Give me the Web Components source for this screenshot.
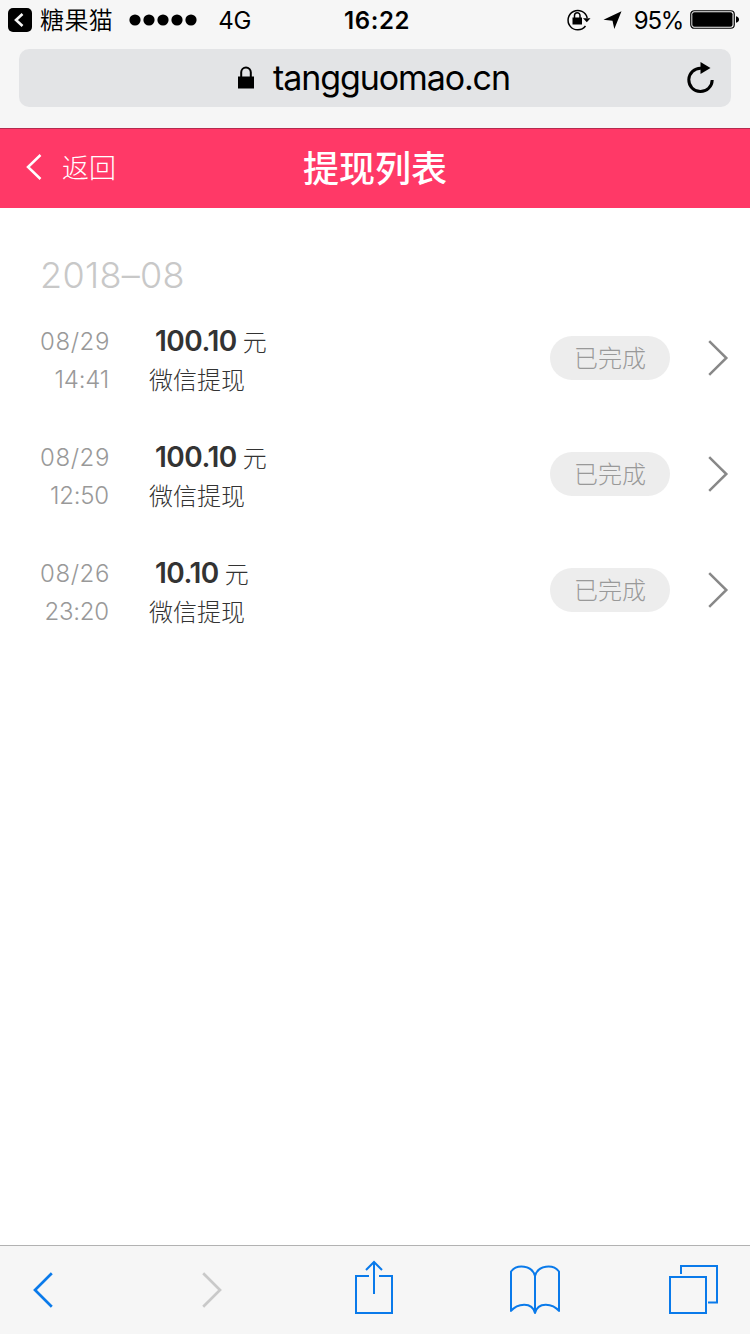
<!DOCTYPE html>
<html lang="zh-CN">
<head>
<meta charset="utf-8">
<title>提现列表</title>
<style>
	body {
		margin: 0;
		background: #fff;
		font-family: Inter, "Noto Sans CJK SC", sans-serif;
	}
</style>
</head>
<body>
<phone-screen>
	<status-bar slot="top" app="糖果猫" network="4G" time="16:22" battery="95%"></status-bar>
	<address-bar slot="top">tangguomao.cn</address-bar>
	<nav-header slot="top" back="返回">提现列表</nav-header>
	<month-group>
		<span slot="month">2018–08</span>
		<withdraw-item date="08/29" time="14:41" amount="100.10" status="已完成">微信提现</withdraw-item>
		<withdraw-item date="08/29" time="12:50" amount="100.10" status="已完成">微信提现</withdraw-item>
		<withdraw-item date="08/26" time="23:20" amount="10.10" status="已完成">微信提现</withdraw-item>
	</month-group>
	<tool-bar slot="bottom"></tool-bar>
</phone-screen>

<script>
class BaseElement extends HTMLElement {
	constructor() {
		super();
		this.attachShadow({ mode: "open" });
		const tmpl = document.createElement("template");
		tmpl.innerHTML = this.constructor.markup;
		this.shadowRoot.appendChild(tmpl.content.cloneNode(true));
	}

	connectedCallback() {
		// every [data-attr] node shows the host attribute of that name
		this.shadowRoot.querySelectorAll("[data-attr]").forEach((node) => {
			node.textContent = this.getAttribute(node.dataset.attr);
		});
	}
}

// name: [width, height, shapes]
const ICONS = {
	app: [24, 24, `<rect width="24" height="24" rx="5" fill="#000"/><path d="M14.5 6 8 12l6.5 6" stroke="#f6f6f6" stroke-width="2.6"/>`],
	signal: [68, 12, [6, 20, 34, 48, 62].map((x) => `<circle cx="${x}" cy="6" r="5.6" fill="#000"/>`).join("")],
	rotation: [24, 22, `<path d="M20.2 9A9.7 9.7 0 1 0 18.5 17" stroke-width="1.5"/><path d="M16 9.3h7.5l-3.7 4z" fill="currentColor"/><rect x="5.5" y="8.5" width="9.5" height="7" fill="currentColor"/><path d="M7.5 10V6.500a2.750 2.750 0 0 1 5.500 0V10" stroke-width="1.5"/>`],
	location: [20, 18, `<path d="M18.5.3.5 8.800 9.500 9.800 11.300 18z" fill="currentColor"/>`],
	battery: [50, 20, `<rect x=".75" y=".75" width="43.5" height="17.5" rx="3.5" stroke-width="1.2"/><rect x="2.3" y="2.3" width="40.2" height="14.4" rx="2" fill="currentColor"/><path d="M46 6.2q3 .8 3 3.3t-3 3.3z" fill="currentColor"/>`],
	lock: [16, 23, `<rect x="0" y="10.5" width="16" height="12" fill="currentColor"/><path d="M3.2 11V6.3a4.8 4.8 0 0 1 9.6 0V11" stroke-width="2"/>`],
	reload: [28, 32, `<path d="M14 6.2A11.7 11.7 0 1 0 25.2 18" stroke-width="3"/><path d="M13.5 0v12l10-6z" fill="currentColor"/>`],
	back: [16, 26, `<path d="M14.5 1 2 13l12.5 12" stroke-width="2.5"/>`],
	more: [20, 36, `<path d="M1.2 1.2 18.3 18 1.2 34.8" stroke-width="2.5"/>`],
	prev: [20, 36, `<path d="M18.8 1.2 2 18l16.8 16.8" stroke-width="2.7"/>`],
	next: [20, 36, `<path d="M1.2 1.2 18 18 1.2 34.8" stroke-width="2.7"/>`],
	share: [38, 53, `<path d="M14 15H1v37h36V15H24" stroke-width="2"/><path d="M19 33V1.5M11 9l8-8 8 8" stroke-width="2"/>`],
	book: [50, 50, `<path d="M25 12C22 1 7 0 1 7.5V47C7 39.5 22 37 25 49 28 37 43 39.5 49 47V7.5C43 0 28 1 25 12V48" stroke-width="2" stroke-linejoin="round"/>`],
	tabs: [49, 49, `<rect x="1" y="12" width="36" height="36" stroke-width="2"/><path d="M12 9V1h36v36.5h-9" stroke-width="2"/>`],
};

class UiIcon extends BaseElement {
	static get markup() {
		return `<style>:host { display: block; flex: none; } svg { display: block; overflow: visible; }</style><svg fill="none" stroke="none"></svg>`;
	}

	connectedCallback() {
		const [width, height, shapes] = ICONS[this.getAttribute("name")];
		const svg = this.shadowRoot.querySelector("svg");
		svg.setAttribute("width", width);
		svg.setAttribute("height", height);
		svg.setAttribute("viewBox", `0 0 ${width} ${height}`);
		svg.innerHTML = shapes;
		svg.querySelectorAll("[stroke-width]:not([stroke])").forEach((shape) => {
			shape.setAttribute("stroke", "currentColor");
		});
	}
}

class PhoneScreen extends BaseElement {
	static get markup() {
		return `
		<style>
		:host {
			display: flex;
			flex-direction: column;
			width: 750px;
			height: 1334px;
			overflow: hidden;
			background: #fff;
		}
		main { flex: 1; }
		</style>
		<slot name="top"></slot>
		<main><slot></slot></main>
		<slot name="bottom"></slot>`;
	}
}

class StatusBar extends BaseElement {
	static get markup() {
		return `
		<style>
		:host {
			display: grid;
			grid-template-columns: 344px 1fr auto;
			align-items: center;
			box-sizing: border-box;
			height: 40px;
			padding-right: 10px;
			background: #f6f6f6;
			color: #000;
			font-size: 24px;
			line-height: 38px;
			white-space: nowrap;
		}
		div { display: flex; align-items: center; height: 40px; }
		span { padding-top: 2px; }
		.left { padding-left: 8px; }
		.app { margin: 0 16px 0 8px; font-weight: 350; letter-spacing: 0.4px; }
		.network { margin-left: 21px; letter-spacing: -0.3px; }
		.time { font-weight: 600; letter-spacing: 0.6px; }
		.battery { margin: 0 7px 0 11px; letter-spacing: -1.3px; }
		.location { margin-left: 12px; }
		</style>
		<div class="left">
			<ui-icon name="app"></ui-icon>
			<span class="app" data-attr="app"></span>
			<ui-icon name="signal"></ui-icon>
			<span class="network" data-attr="network"></span>
		</div>
		<span class="time" data-attr="time"></span>
		<div>
			<ui-icon name="rotation"></ui-icon>
			<ui-icon class="location" name="location"></ui-icon>
			<span class="battery" data-attr="battery"></span>
			<ui-icon name="battery"></ui-icon>
		</div>`;
	}
}

class AddressBar extends BaseElement {
	static get markup() {
		return `
		<style>
		:host {
			display: block;
			box-sizing: border-box;
			height: 88px;
			padding: 9px 19px 0;
			background: #f6f6f6;
			color: #000;
		}
		.field {
			display: flex;
			align-items: center;
			box-sizing: border-box;
			height: 58px;
			padding: 0 16px 0 219px;
			border-radius: 10px;
			background: #e3e4e6;
		}
		.url {
			flex: 1;
			margin-left: 19px;
			font-size: 34px;
			letter-spacing: -1.1px;
			line-height: 56px;
		}
		ui-icon { margin-bottom: 1px; }
		</style>
		<div class="field">
			<ui-icon name="lock"></ui-icon>
			<span class="url"><slot></slot></span>
			<ui-icon name="reload"></ui-icon>
		</div>`;
	}
}

class NavHeader extends BaseElement {
	static get markup() {
		return `
		<style>
		:host {
			display: grid;
			grid-template-columns: 1fr auto 1fr;
			align-items: center;
			box-sizing: border-box;
			height: 80px;
			border-top: 1px solid #b52b4e;
			background: #ff3967;
			color: #fff;
		}
		.back {
			display: flex;
			align-items: center;
			gap: 20px;
			padding: 0 0 4px 26px;
			font-size: 27px;
			font-weight: 300;
		}
		h1 {
			margin: 0;
			font-size: 36px;
			font-weight: 500;
			line-height: 78px;
		}
		</style>
		<div class="back"><ui-icon name="back"></ui-icon><span data-attr="back"></span></div>
		<h1><slot></slot></h1>`;
	}
}

class MonthGroup extends BaseElement {
	static get markup() {
		return `
		<style>
		:host { display: block; padding-top: 41px; }
		h2 {
			margin: 0;
			padding-left: 40px;
			height: 51px;
			color: #c8c8c8;
			font-size: 36px;
			font-weight: 300;
			letter-spacing: 0.3px;
			line-height: 53px;
		}
		</style>
		<h2><slot name="month"></slot></h2>
		<slot></slot>`;
	}
}

class WithdrawItem extends BaseElement {
	static get markup() {
		return `
		<style>
		:host {
			display: grid;
			grid-template-columns: 109px 1fr 120px 58px;
			align-items: center;
			box-sizing: border-box;
			height: 116px;
			padding-right: 22px;
			font-size: 24px;
			line-height: 38px;
			white-space: nowrap;
		}
		.when {
			display: flex;
			flex-direction: column;
			align-items: flex-end;
			padding-top: 5px;
			color: #999;
			font-weight: 300;
		}
		.date { letter-spacing: 0.6px; margin-right: -1px; }
		.time { letter-spacing: -0.2px; }
		.what {
			display: flex;
			flex-direction: column;
			padding: 5px 0 0 40px;
			color: #333;
			font-weight: 300;
		}
		.sum { display: flex; align-items: baseline; gap: 6px; padding-left: 6px; height: 40px; }
		b { font-size: 28px; font-weight: 600; letter-spacing: -0.5px; }
		.status {
			height: 44px;
			border-radius: 22px;
			background: #ededed;
			color: #999;
			font-weight: 300;
			line-height: 45px;
			text-align: center;
		}
		ui-icon { margin-left: 38px; color: #888; }
		</style>
		<div class="when"><span class="date" data-attr="date"></span><span class="time" data-attr="time"></span></div>
		<div class="what">
			<div class="sum"><b data-attr="amount"></b><span>元</span></div>
			<slot></slot>
		</div>
		<div class="status" data-attr="status"></div>
		<ui-icon name="more"></ui-icon>`;
	}
}

class ToolBar extends BaseElement {
	static get markup() {
		return `
		<style>
		:host {
			display: grid;
			grid-template-columns: 169px 153px 155px 159px auto;
			align-items: end;
			box-sizing: border-box;
			height: 89px;
			padding: 0 0 20px 33px;
			border-top: 1px solid #b2b2b2;
			background: #f6f6f6;
			color: #0a7aea;
		}
		.chevron { margin-bottom: 6px; }
		.off { color: #c9c9c9; }
		</style>
		<ui-icon class="chevron" name="prev"></ui-icon>
		<ui-icon class="chevron off" name="next"></ui-icon>
		<ui-icon name="share"></ui-icon>
		<ui-icon name="book"></ui-icon>
		<ui-icon name="tabs"></ui-icon>`;
	}
}

customElements.define("ui-icon", UiIcon);
customElements.define("phone-screen", PhoneScreen);
customElements.define("status-bar", StatusBar);
customElements.define("address-bar", AddressBar);
customElements.define("nav-header", NavHeader);
customElements.define("month-group", MonthGroup);
customElements.define("withdraw-item", WithdrawItem);
customElements.define("tool-bar", ToolBar);
</script>
</body>
</html>
